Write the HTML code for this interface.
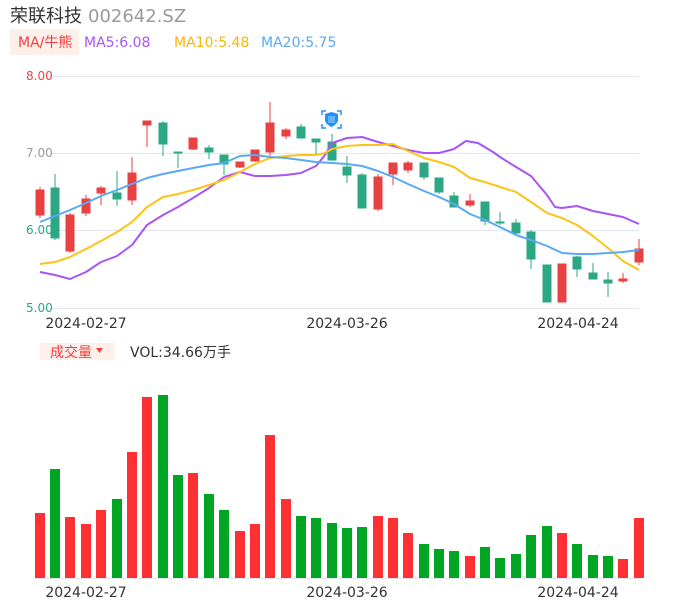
<!DOCTYPE html>
<html><head><meta charset="utf-8"><style>
html,body{margin:0;padding:0;background:#fff;width:686px;height:606px;overflow:hidden}
svg{display:block;font-family:"Liberation Sans","DejaVu Sans","Noto Sans CJK SC",sans-serif}
</style></head><body>
<svg width="686" height="606" viewBox="0 0 686 606" xmlns="http://www.w3.org/2000/svg">
<text x="10" y="22" font-size="18" fill="#333" font-family="'Liberation Sans','Noto Sans CJK SC',sans-serif">荣联科技</text>
<text x="88" y="22" font-size="18" fill="#999" font-family="'DejaVu Sans',sans-serif">002642.SZ</text>
<rect x="10" y="29" width="69" height="26" fill="#fdefea"/>
<text x="18" y="47" font-size="14" fill="#f24141" font-family="'DejaVu Sans','Noto Sans CJK SC',sans-serif">MA/牛熊</text>
<g font-size="14" font-family="'DejaVu Sans',sans-serif">
<text x="84" y="47" fill="#a855f7">MA5:6.08</text>
<text x="174" y="47" fill="#fbb40a">MA10:5.48</text>
<text x="261" y="47" fill="#5aa9f5">MA20:5.75</text>
</g>
<g stroke="#e3e6f3" stroke-width="1">
<line x1="50" y1="76.5" x2="639" y2="76.5"/><line x1="50" y1="153.5" x2="639" y2="153.5"/>
<line x1="50" y1="230.5" x2="639" y2="230.5"/><line x1="50" y1="308.5" x2="639" y2="308.5"/>
</g>
<g font-size="12" font-family="'DejaVu Sans',sans-serif">
<text x="26" y="80" fill="#f24141">8.00</text>
<text x="26" y="157" fill="#999">7.00</text>
<text x="26" y="234" fill="#2ba784">6.00</text>
<text x="26" y="312" fill="#2ba784">5.00</text>
</g>
<g font-size="14" fill="#333" font-family="'DejaVu Sans',sans-serif" text-anchor="middle">
<text x="86" y="328">2024-02-27</text><text x="347" y="328">2024-03-26</text><text x="578" y="328">2024-04-24</text>
<text x="86" y="597">2024-02-27</text><text x="347" y="597">2024-03-26</text><text x="578" y="597">2024-04-24</text>
</g>
<!-- candles -->
<g stroke-width="1">
<g fill="#e84142" stroke="#e84142">
<line x1="40" y1="187" x2="40" y2="218"/><rect x="36" y="190" width="8" height="25"/>
<line x1="70" y1="213" x2="70" y2="253"/><rect x="66" y="215" width="8" height="36"/>
<line x1="86" y1="195" x2="86" y2="216"/><rect x="82" y="199" width="8" height="14"/>
<line x1="101" y1="186" x2="101" y2="205"/><rect x="97" y="188" width="8" height="5"/>
<line x1="132" y1="157" x2="132" y2="205"/><rect x="128" y="173" width="8" height="27"/>
<line x1="147" y1="121" x2="147" y2="147"/><rect x="143" y="121" width="8" height="4"/>
<line x1="193" y1="138" x2="193" y2="150"/><rect x="189" y="138" width="8" height="11"/>
<line x1="240" y1="162" x2="240" y2="168"/><rect x="236" y="162" width="8" height="5"/>
<line x1="255" y1="150" x2="255" y2="162"/><rect x="251" y="150" width="8" height="11"/>
<line x1="270" y1="102" x2="270" y2="156"/><rect x="266" y="123" width="8" height="29"/>
<line x1="286" y1="128" x2="286" y2="139"/><rect x="282" y="130" width="8" height="6"/>
<line x1="378" y1="174" x2="378" y2="211"/><rect x="374" y="177" width="8" height="32"/>
<line x1="393" y1="163" x2="393" y2="185"/><rect x="389" y="163" width="8" height="11"/>
<line x1="408" y1="161" x2="408" y2="173"/><rect x="404" y="163" width="8" height="7"/>
<line x1="470" y1="194" x2="470" y2="207"/><rect x="466" y="201" width="8" height="4"/>
<line x1="562" y1="264" x2="562" y2="302"/><rect x="558" y="264" width="8" height="38"/>
<line x1="623" y1="273" x2="623" y2="283"/><rect x="619" y="279" width="8" height="2"/>
<line x1="639" y1="239" x2="639" y2="265"/><rect x="635" y="249" width="8" height="13"/>
</g>
<g fill="#2ba784" stroke="#2ba784">
<line x1="55" y1="174" x2="55" y2="240"/><rect x="51" y="188" width="8" height="50"/>
<line x1="117" y1="171" x2="117" y2="206"/><rect x="113" y="193" width="8" height="6"/>
<line x1="163" y1="121" x2="163" y2="156"/><rect x="159" y="123" width="8" height="21"/>
<line x1="178" y1="152" x2="178" y2="168"/><rect x="174" y="152" width="8" height="1"/>
<line x1="209" y1="145" x2="209" y2="159"/><rect x="205" y="148" width="8" height="4"/>
<line x1="224" y1="155" x2="224" y2="175"/><rect x="220" y="155" width="8" height="9"/>
<line x1="301" y1="124" x2="301" y2="138"/><rect x="297" y="127" width="8" height="11"/>
<line x1="316" y1="139" x2="316" y2="155"/><rect x="312" y="139" width="8" height="3"/>
<line x1="332" y1="134" x2="332" y2="161"/><rect x="328" y="142" width="8" height="18"/>
<line x1="347" y1="156" x2="347" y2="183"/><rect x="343" y="167" width="8" height="8"/>
<line x1="362" y1="173" x2="362" y2="208"/><rect x="358" y="175" width="8" height="33"/>
<line x1="424" y1="163" x2="424" y2="180"/><rect x="420" y="163" width="8" height="14"/>
<line x1="439" y1="178" x2="439" y2="194"/><rect x="435" y="178" width="8" height="14"/>
<line x1="454" y1="192" x2="454" y2="207"/><rect x="450" y="196" width="8" height="11"/>
<line x1="485" y1="202" x2="485" y2="225"/><rect x="481" y="202" width="8" height="19"/>
<line x1="500" y1="212" x2="500" y2="225"/><rect x="496" y="222" width="8" height="1"/>
<line x1="516" y1="219" x2="516" y2="234"/><rect x="512" y="223" width="8" height="10"/>
<line x1="531" y1="230" x2="531" y2="269"/><rect x="527" y="232" width="8" height="27"/>
<line x1="547" y1="265" x2="547" y2="302"/><rect x="543" y="265" width="8" height="37"/>
<line x1="577" y1="256" x2="577" y2="277"/><rect x="573" y="257" width="8" height="12"/>
<line x1="593" y1="263" x2="593" y2="279"/><rect x="589" y="273" width="8" height="6"/>
<line x1="608" y1="272" x2="608" y2="297"/><rect x="604" y="280" width="8" height="3"/>
</g>
</g>
<!-- MA lines -->
<g fill="none" stroke-width="2" stroke-linejoin="round">
<polyline stroke="#a855f7" points="40,272 55,275 70,279 86,272 101,262 117,256 132,245 147,225 163,215 178,207 193,198 209,188 224,177 240,172 255,176 270,176 286,175 301,173 316,166 325,155 332,143 347,138 362,137 378,142 393,146 408,150 424,153 439,153 454,149 466,141 478,143 493,152 500,157 516,167 531,176 547,195 555,207 562,208 577,206 593,211 608,214 623,217 639,224"/>
<polyline stroke="#fcc419" points="40,264 55,262 70,257 86,249 101,241 117,232 132,222 147,207 163,197 178,194 193,190 209,185 224,180 240,172 255,164 270,158 286,156 301,155 316,155 325,153 332,149 347,146 362,145 378,145 393,144 408,151 424,158 439,162 454,167 470,178 485,182 500,187 516,192 531,202 547,213 562,218 577,225 593,236 608,248 623,261 639,270"/>
<polyline stroke="#5aa9f5" points="40,222 55,216 70,210 86,203 101,196 117,190 132,184 147,178 163,174 178,171 193,168 209,165 224,163 240,156 255,155 270,157 286,158 301,160 316,162 332,163 347,164 362,166 378,171 393,177 408,184 424,191 439,197 454,204 470,214 485,220 500,227 516,235 531,240 547,246 562,253 577,254 593,254 608,253 623,252 639,250"/>
</g>
<!-- icon -->
<g stroke="#1e90ff" stroke-width="1.5" fill="none">
<path d="M322,115 V111 H326 M337,111 H341 V115 M341,124 V128 H337 M326,128 H322 V124"/>
</g>
<path d="M325,114 Q328,113 331.5,112 Q335,113 338,114 V121 Q336,125 331.5,127 Q327,125 325,121 Z" fill="#1e90ff"/>
<rect x="328" y="116" width="7" height="7" fill="#7cc3ff" opacity="0.7"/>
<!-- volume header -->
<rect x="40" y="343" width="75" height="17" fill="#fdefea"/>
<text x="50" y="357" font-size="14" fill="#f24141" font-family="'Noto Sans CJK SC',sans-serif">成交量</text>
<path d="M96,348 L103,348 L99.5,353 Z" fill="#f24141"/>
<text x="130" y="357" font-size="14" fill="#333" font-family="'DejaVu Sans','Noto Sans CJK SC',sans-serif">VOL:34.66万手</text>
<!-- volume bars -->
<g fill="#ff3034">
<rect x="35" y="513" width="10" height="65"/>
<rect x="65" y="517" width="10" height="61"/>
<rect x="81" y="524" width="10" height="54"/>
<rect x="96" y="510" width="10" height="68"/>
<rect x="127" y="452" width="10" height="126"/>
<rect x="142" y="397" width="10" height="181"/>
<rect x="188" y="473" width="10" height="105"/>
<rect x="235" y="531" width="10" height="47"/>
<rect x="250" y="524" width="10" height="54"/>
<rect x="265" y="435" width="10" height="143"/>
<rect x="281" y="499" width="10" height="79"/>
<rect x="373" y="516" width="10" height="62"/>
<rect x="388" y="518" width="10" height="60"/>
<rect x="403" y="533" width="10" height="45"/>
<rect x="465" y="556" width="10" height="22"/>
<rect x="557" y="533" width="10" height="45"/>
<rect x="618" y="559" width="10" height="19"/>
<rect x="634" y="518" width="10" height="60"/>
</g>
<g fill="#00a524">
<rect x="50" y="469" width="10" height="109"/>
<rect x="112" y="499" width="10" height="79"/>
<rect x="158" y="395" width="10" height="183"/>
<rect x="173" y="475" width="10" height="103"/>
<rect x="204" y="494" width="10" height="84"/>
<rect x="219" y="510" width="10" height="68"/>
<rect x="296" y="516" width="10" height="62"/>
<rect x="311" y="518" width="10" height="60"/>
<rect x="327" y="523" width="10" height="55"/>
<rect x="342" y="528" width="10" height="50"/>
<rect x="357" y="527" width="10" height="51"/>
<rect x="419" y="544" width="10" height="34"/>
<rect x="434" y="549" width="10" height="29"/>
<rect x="449" y="551" width="10" height="27"/>
<rect x="480" y="547" width="10" height="31"/>
<rect x="495" y="558" width="10" height="20"/>
<rect x="511" y="554" width="10" height="24"/>
<rect x="526" y="535" width="10" height="43"/>
<rect x="542" y="526" width="10" height="52"/>
<rect x="572" y="544" width="10" height="34"/>
<rect x="588" y="555" width="10" height="23"/>
<rect x="603" y="556" width="10" height="22"/>
</g>
<line x1="34" y1="578.5" x2="640" y2="578.5" stroke="#e3e6f3"/>
</svg>
</body></html>
